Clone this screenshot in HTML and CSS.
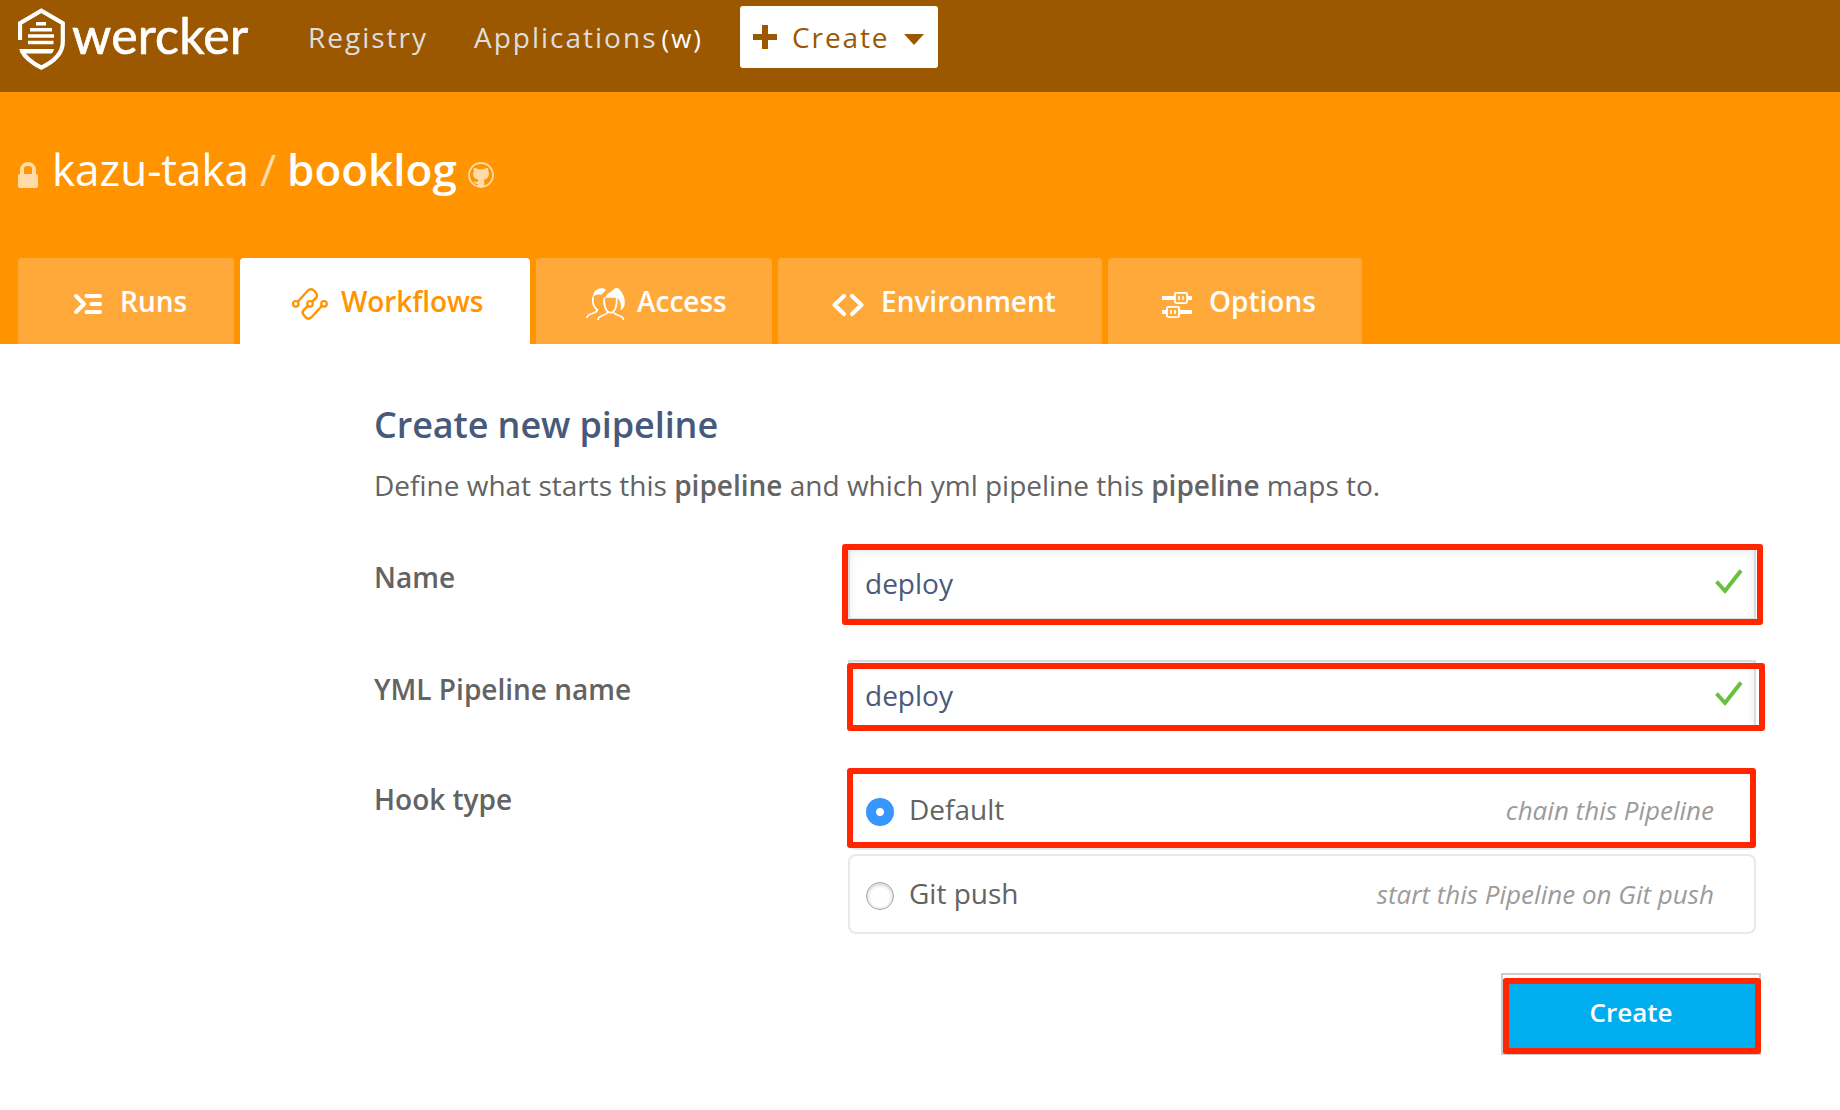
FILE: index.html
```html
<!DOCTYPE html>
<html lang="en">
<head>
<meta charset="utf-8">
<title>Create new pipeline - wercker</title>
<link rel="stylesheet" href="styles.css">
</head>
<body>
<header class="topbar">
  <a class="brand">
    <svg class="brand-mark" width="47" height="62" viewBox="0 0 47 62">
      <path d="M2 32V15.3L23.3 2.8L44.8 15.3V34C44.8 45 36 53.5 23.3 59.6C14 55 7.5 50 3.5 42.5" fill="none" stroke="#fff" stroke-width="4.2"/>
      <path d="M18 14h10v3.4H18zM12 20h22v3.4H12zM10 26.2h26v3.6H10zM10 32.7h25.5v3.6H10zM1 41h35q-.5 3-2.500 4.500H4z" fill="#fff"/>
    </svg>
    <span class="brand-name">wercker</span>
  </a>
  <a class="nav-link registry">Registry</a>
  <a class="nav-link">Applications<span class="shortcut">(w)</span></a>
  <button class="create-menu">
    <svg width="24" height="24" viewBox="0 0 24 24"><path d="M9 0h6v9h9v6h-9v9H9v-9H0V9h9z" fill="#9b5800"/></svg>
    <span class="create-label">Create</span>
    <svg class="caret" width="20" height="11" viewBox="0 0 20 11"><path d="M0 0h20L10 11z" fill="#9b5800"/></svg>
  </button>
</header>

<section class="hero">
  <h1 class="project">
    <svg width="20" height="26" viewBox="0 0 20 26"><path d="M2 12V8a8 8 0 0 1 16 0v4q2 0 2 2v10q0 2-2 2H2q-2 0-2-2V14q0-2 2-2zm4 0h8V7q0-3-3-3H9Q6 4 6 7z" fill="#ffdba8"/></svg>
    <span>kazu-taka</span>
    <span class="slash">/</span>
    <strong>booklog</strong>
    <svg width="26" height="26" viewBox="0 0 26 26"><circle cx="13" cy="13" r="12" fill="none" stroke="#ffdba8" stroke-width="1.800"/><path d="M6 6q2.500 0 4.500 1.200h5Q17.500 6 20 6q.8 2 .2 3.500 1 1.300.7 3.300-.4 4-5.200 5 .600.8.600 2V25H9.700v-3Q6.500 22 5.500 18.500q1.500 1.500 4.200 1.500 0-1.400.6-2.200-4.800-1-5.200-5-.2-2 .7-3.300Q5.200 8 6 6z" fill="#ffdba8"/></svg>
  </h1>
  <nav class="tabs">
    <a class="tab tab-runs">
      <svg width="28" height="32" viewBox="0 0 28 32" fill="none" stroke="#fff" stroke-width="4" stroke-linecap="round" stroke-linejoin="round"><path d="M2 8l8 8-8 8M12.500 8H26M17.500 16H26M12.500 24H26"/></svg>
      <span>Runs</span>
    </a>
    <a class="tab tab-workflows active">
      <svg width="36" height="32" viewBox="0 0 36 32" fill="none" stroke="#ff9400" stroke-width="2.200" stroke-linecap="round"><circle cx="3.800" cy="15.800" r="2.800"/><circle cx="18" cy="15.800" r="2.800"/><circle cx="32" cy="15.800" r="2.800"/><path d="M6 13.500L15.500 3Q19-.5 22.500 3l1.500 2q2.300 3-.5 5.500L20 13.600M16 18l-4 3.700q-2.500 2.500-.5 5l2 2.500q3 3 6 0L29.800 18" stroke-width="2.400"/></svg>
      <span>Workflows</span>
    </a>
    <a class="tab tab-access">
      <svg width="39" height="32" viewBox="0 0 39 32"><path d="M19 10C20 5.500 25 4.500 27.500 1.500C29.500-.5 32-.5 34 2C37.500 6.500 39 10 38.800 15C38.700 18.500 37 21 34.500 22.500C35 19.500 36 14 31 9.500C27 10 22 9.500 19 10zM6.800 9C7 4 10 .6 15 .2C18 0 19.500.8 19.800 2.200C18.500 4 17 4 16 6.500C12.500 6.500 9.500 6 6.800 9z" fill="#fff"/><path d="M18.300 9.500C17.500 16 19.500 24.500 24.500 24.700C29.500 24.500 31.500 16 30.600 9M12 32C12 27 17 29 21.800 24.500M37.500 32C37.500 27 32 29 27.500 24.500M7 8.500C6.200 14 7.500 19 11.300 22C10.500 26.500 1 24.500.8 30" fill="none" stroke="#fff" stroke-width="1.700"/></svg>
      <span>Access</span>
    </a>
    <a class="tab tab-environment">
      <svg width="32" height="32" viewBox="0 0 32 32" fill="none" stroke="#fff" stroke-width="4.200" stroke-linecap="round" stroke-linejoin="round"><path d="M12 8l-9.500 9 9.500 9M20 8l9.500 9L20 26"/></svg>
      <span>Environment</span>
    </a>
    <a class="tab tab-options">
      <svg width="30" height="32" viewBox="0 0 30 32"><path d="M0 8h12v4H0zM25 8h5v4h-5zM0 22h5v4H0zM18 22h12v4H18z" fill="#fff"/><rect x="12.900" y="4.900" width="12.200" height="10.200" rx="1.500" fill="none" stroke="#fff" stroke-width="1.900"/><rect x="4.900" y="18.900" width="12.200" height="10.200" rx="1.500" fill="none" stroke="#fff" stroke-width="1.900"/><path d="M17 8v4M21 8v4M9 22v4M13 22v4" stroke="#fff" stroke-width="1.600"/></svg>
      <span>Options</span>
    </a>
  </nav>
</section>

<main class="content">
  <h2 class="title">Create new pipeline</h2>
  <p class="intro">Define what starts this <b>pipeline</b> and which yml pipeline this <b>pipeline</b> maps to.</p>
  <form class="form">
    <label class="label">Name</label>
    <div class="field">
      <input class="input" type="text" value="deploy">
      <svg class="check" width="30" height="27" viewBox="0 0 30 27"><path d="M2.500 13.500l8.500 9.500L27 2.500" fill="none" stroke="#6ac03c" stroke-width="4"/></svg>
      <i class="mark mark-name"></i>
    </div>
    <label class="label">YML Pipeline name</label>
    <div class="field">
      <input class="input" type="text" value="deploy">
      <svg class="check" width="30" height="27" viewBox="0 0 30 27"><path d="M2.500 13.500l8.500 9.500L27 2.500" fill="none" stroke="#6ac03c" stroke-width="4"/></svg>
      <i class="mark mark-yml"></i>
    </div>
    <label class="label">Hook type</label>
    <div class="choices">
      <div class="choice">
        <span class="radio checked"></span>
        <span>Default</span>
        <em class="hint">chain this Pipeline</em>
        <i class="mark mark-hook"></i>
      </div>
      <div class="choice">
        <span class="radio"></span>
        <span>Git push</span>
        <em class="hint">start this Pipeline on Git push</em>
      </div>
    </div>
    <div class="actions">
      <button class="submit" type="button">Create<i class="mark mark-submit"></i></button>
    </div>
  </form>
</main>
</body>
</html>
```
FILE: styles.css
```css
* { box-sizing: border-box; }

body {
  margin: 0;
  background: #fff;
  color: #636363;
  font-family: "Open Sans", "Noto Sans", sans-serif;
  font-size: 28px;
  line-height: 40px;
}

svg { display: block; flex: none; }
button, input { font-family: inherit; }

/* top bar */
.topbar {
  display: grid;
  grid-template-columns: 289px 167px 266px 198px;
  grid-template-rows: 74px;
  align-items: center;
  height: 92px;
  padding-left: 18px;
  background: #9b5800;
}
.brand { display: flex; align-items: center; gap: 7px; padding-top: 4px; }
.brand-name {
  margin-top: -9px;
  color: #fff;
  font-family: Lato, sans-serif;
  font-size: 50px;
  line-height: 62px;
  letter-spacing: .2px;
  -webkit-text-stroke: .7px #fff;
}
.nav-link { color: #dedede; letter-spacing: 2px; white-space: nowrap; }
.registry { padding-left: 1px; }
.shortcut { margin-left: 4px; color: #fff; font-size: 26px; }
.create-menu {
  display: flex;
  align-items: center;
  height: 62px;
  padding: 0 0 0 13px;
  border: 0;
  border-radius: 3px;
  background: #fff;
  color: #9b5800;
  font-size: 28px;
  letter-spacing: 1.900px;
}
.create-label { width: 112px; margin-left: 15px; text-align: left; }
.caret { margin-top: 4px; }

/* project header */
.hero {
  display: flex;
  flex-direction: column;
  justify-content: space-between;
  height: 252px;
  padding: 47px 0 0 18px;
  background: #ff9400;
}
.project {
  display: grid;
  grid-template-columns: 34px 208px 27px 181px 26px;
  align-items: center;
  margin: 0;
  color: #fff;
  font-size: 44px;
  font-weight: 400;
  line-height: 60px;
}
.project svg { margin-top: 12px; }
.project strong { font-weight: 600; }
.slash { color: #ffdba8; }

.tabs { display: flex; gap: 6px; }
.tab {
  display: flex;
  align-items: center;
  height: 86px;
  border-radius: 4px 4px 0 0;
  background: #ffa93a;
  color: #fff;
  font-weight: 600;
}
.tab svg { margin-top: 6px; overflow: visible; }
.tab.active { background: #fff; color: #ff9400; }
.tab-runs { width: 216px; padding-left: 56px; gap: 18px; }
.tab-workflows { width: 290px; padding-left: 52px; gap: 13px; letter-spacing: -.1px; }
.tab-access { width: 236px; padding-left: 50px; gap: 12px; }
.tab-environment { width: 324px; padding-left: 54px; gap: 17px; }
.tab-options { width: 254px; padding-left: 54px; gap: 17px; }

/* pipeline form */
.content { padding: 56px 0 0 374px; }
.title { margin: 0; color: #485a7c; font-size: 36px; font-weight: 600; line-height: 50px; letter-spacing: -.1px; }
.intro { margin: 15px 0 0; }
.intro b { font-weight: 600; }
.form {
  display: grid;
  grid-template-columns: 474px 908px;
  grid-template-rows: 73px 71px 164px 82px;
  row-gap: 39px;
  margin-top: 43px;
}
.label { padding-top: 9px; font-weight: 600; }
.field { position: relative; height: 71px; }
.input {
  display: block;
  width: 100%;
  height: 71px;
  padding: 0 15px 2px;
  border: 2px solid #dadddf;
  border-bottom-width: 1px;
  border-radius: 0;
  background: #fff;
  box-shadow: inset 0 2px 8px rgba(0, 30, 40, .09);
  color: #485a7c;
  font-size: 28px;
}
.check { position: absolute; top: 20px; right: 12px; }

.choices { display: grid; gap: 4px; }
.choice {
  position: relative;
  display: flex;
  align-items: center;
  height: 80px;
  padding: 0 40px 2px 16px;
  border: 2px solid #e5eaea;
  border-radius: 8px;
}
.radio {
  width: 28px;
  height: 28px;
  margin: 6px 15px 0 0;
  border: 1px solid #a5a5a5;
  border-radius: 50%;
  box-shadow: inset 0 1px 4px rgba(0, 0, 0, .25);
}
.radio.checked {
  border: 0;
  background: radial-gradient(circle, #fff 3.500px, #3797ff 4.500px);
  box-shadow: none;
}
.hint { margin-left: auto; padding-top: 2px; color: #9b9b9b; font-size: 26px; }

.actions { display: flex; grid-column: 2; justify-content: flex-end; margin-right: -5px; }
.submit {
  position: relative;
  width: 260px;
  height: 82px;
  padding: 0 0 4px;
  border: 2px solid #ccc;
  background: linear-gradient(#fff 4px, #00aeef 4px);
  color: #fff;
  font-size: 26px;
  font-weight: 600;
}

/* red highlight frames over the fields */
.mark { position: absolute; border: 6px solid #ff2600; border-radius: 3px; }
.mark-name { left: -6px; top: -4px; width: 921px; height: 81px; }
.mark-yml { left: -1px; top: 3px; width: 918px; height: 68px; }
.mark-hook { left: -3px; top: -4px; width: 909px; height: 80px; }
.mark-submit { left: 0; top: 3px; width: 258px; height: 76px; }
```
